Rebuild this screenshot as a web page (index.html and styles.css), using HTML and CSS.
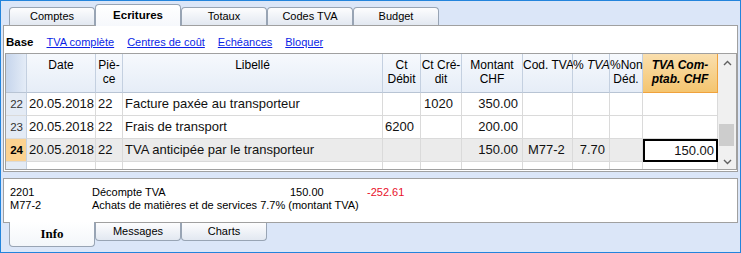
FILE: index.html
```html
<!DOCTYPE html>
<html lang="fr">
<head>
  <meta charset="UTF-8">
  <title>Ecritures</title>
  <link rel="stylesheet" href="styles.css">
</head>
<body>
  <div class="window">
    <div class="tabs top-tabs">
      <div class="tab">Comptes</div>
      <div class="tab active">Ecritures</div>
      <div class="tab">Totaux</div>
      <div class="tab">Codes TVA</div>
      <div class="tab">Budget</div>
    </div>

    <div class="panel">
      <div class="views">
        <b>Base</b>
        <a href="#">TVA complète</a>
        <a href="#">Centres de coût</a>
        <a href="#">Echéances</a>
        <a href="#">Bloquer</a>
      </div>

      <div class="table-wrap">
        <div class="grid">
          <div class="h corner"></div>
          <div class="h">Date</div>
          <div class="h">Piè-<br>ce</div>
          <div class="h">Libellé</div>
          <div class="h">Ct<br>Débit</div>
          <div class="h">Ct Cré-<br>dit</div>
          <div class="h">Montant<br>CHF</div>
          <div class="h">Cod. TVA</div>
          <div class="h">% <i>TVA</i></div>
          <div class="h">%Non<br>Déd.</div>
          <div class="h hot">TVA Com-<br>ptab. CHF</div>

          <div class="c num">22</div>
          <div class="c">20.05.2018</div>
          <div class="c">22</div>
          <div class="c">Facture paxée au transporteur</div>
          <div class="c"></div>
          <div class="c cr">1020</div>
          <div class="c r">350.00</div>
          <div class="c"></div>
          <div class="c"></div>
          <div class="c"></div>
          <div class="c"></div>

          <div class="c num">23</div>
          <div class="c">20.05.2018</div>
          <div class="c">22</div>
          <div class="c">Frais de transport</div>
          <div class="c">6200</div>
          <div class="c"></div>
          <div class="c r">200.00</div>
          <div class="c"></div>
          <div class="c"></div>
          <div class="c"></div>
          <div class="c"></div>

          <div class="c num cur">24</div>
          <div class="c row-on">20.05.2018</div>
          <div class="c row-on">22</div>
          <div class="c row-on">TVA anticipée par le transporteur</div>
          <div class="c row-on"></div>
          <div class="c row-on"></div>
          <div class="c row-on r">150.00</div>
          <div class="c row-on code">M77-2</div>
          <div class="c row-on r">7.70</div>
          <div class="c row-on"></div>
          <div class="c sel r">150.00</div>

          <div class="c num">25</div>
          <div class="c"></div>
          <div class="c"></div>
          <div class="c"></div>
          <div class="c"></div>
          <div class="c"></div>
          <div class="c"></div>
          <div class="c"></div>
          <div class="c"></div>
          <div class="c"></div>
          <div class="c"></div>
        </div>

        <div class="scrollbar">
          <div class="arrow">
            <svg width="9" height="6" viewBox="0 0 9 6"><polyline points="1,5 4.5,1.5 8,5" fill="none" stroke="#606060" stroke-width="1.4"/></svg>
          </div>
          <div class="track"><div class="thumb"></div></div>
          <div class="arrow">
            <svg width="9" height="6" viewBox="0 0 9 6"><polyline points="1,1 4.5,4.5 8,1" fill="none" stroke="#606060" stroke-width="1.4"/></svg>
          </div>
        </div>
      </div>
    </div>

    <div class="info">
      <div class="info-line">
        <span class="info-code">2201</span>
        <span class="info-desc">Décompte TVA</span>
        <span class="info-amount">150.00</span>
        <span class="info-neg">-252.61</span>
      </div>
      <div class="info-line">
        <span class="info-code">M77-2</span>
        <span>Achats de matières et de services 7.7% (montant TVA)</span>
      </div>
    </div>

    <div class="tabs bottom-tabs">
      <div class="tab active">Info</div>
      <div class="tab">Messages</div>
      <div class="tab">Charts</div>
    </div>
  </div>
</body>
</html>
```

FILE: styles.css
```css
body {
  margin: 0;
  font-family: "Liberation Sans", Arial, sans-serif;
  color: #000;
}
.window {
  width: 741px;
  height: 253px;
  box-sizing: border-box;
  border: 1px solid #2384dc;
  background: #dbe6f8;
  display: flex;
  flex-direction: column;
}

/* tabs */
.tabs {
  display: flex;
  padding-left: 8px;
}
.tab {
  width: 86px;
  box-sizing: border-box;
  height: 18px;
  border: 1px solid #98a4b4;
  background: linear-gradient(#fdfdfe, #e2e8f1);
  font-size: 11px;
  text-align: center;
  line-height: 16px;
}
.top-tabs {
  height: 24px;
  align-items: flex-end;
}
.top-tabs .tab {
  border-bottom: none;
  border-radius: 4px 4px 0 0;
}
.top-tabs .tab.active {
  height: 22px;
  margin-bottom: -1px;
  line-height: 21px;
  font-weight: bold;
  font-size: 11.5px;
  background: linear-gradient(#ffffff, #f6f8fc);
  position: relative;
  z-index: 1;
}
.bottom-tabs {
  align-items: flex-start;
}
.bottom-tabs .tab {
  border-top: none;
  border-radius: 0 0 4px 4px;
}
.bottom-tabs .tab.active {
  height: 25px;
  margin-top: -1px;
  line-height: 24px;
  font-family: "Liberation Serif", "Times New Roman", serif;
  font-weight: bold;
  font-size: 13px;
  background: linear-gradient(#ffffff, #f3f6fa);
  position: relative;
  z-index: 1;
}

/* main panel */
.panel {
  margin: 0 2px;
  height: 147px;
  box-sizing: border-box;
  border: 1px solid #a0a0a0;
  background: #fff;
  padding: 0 0 1px 1px;
}
.views {
  display: flex;
  gap: 13px;
  height: 27px;
  box-sizing: border-box;
  padding: 9px 0 0 1px;
  font-size: 11px;
  line-height: 14px;
}
.views b {
  font-size: 11.5px;
}
.views a {
  color: #0b1fe6;
  text-decoration: underline;
}

.table-wrap {
  display: flex;
  height: 117px;
  box-sizing: border-box;
  border: 1px solid #a0a0a0;
}
.grid {
  display: grid;
  grid-template-columns: 21px 69px 27px 260px 38px 41px 61px 50px 37px 33px 75px;
  grid-template-rows: 39px 23px 23px 23px 23px;
  height: 115px;
  overflow: hidden;
}
.h {
  box-sizing: border-box;
  border-right: 1px solid #c4d0e0;
  border-bottom: 1px solid #b8c4d4;
  background: linear-gradient(#f6f9fd, #e6edf7);
  font-size: 12px;
  line-height: 14px;
  padding-top: 4px;
  text-align: center;
  white-space: nowrap;
}
.h.corner {
  background: linear-gradient(to right, #c6d5ec, #e4ecf7);
}
.h.hot {
  background: linear-gradient(#fadfae, #f4c56f);
  border-right-color: #f0a23c;
  border-bottom-color: #f0a23c;
  font-weight: bold;
  font-style: italic;
}
.c {
  box-sizing: border-box;
  border-right: 1px solid #dadada;
  border-bottom: 1px solid #dadada;
  font-size: 13px;
  line-height: 22px;
  padding-left: 2px;
  color: #111;
  white-space: nowrap;
  overflow: hidden;
}
.c.r {
  text-align: right;
  padding-right: 4px;
}
.c.cr {
  padding-left: 3px;
}
.c.code {
  padding-left: 5px;
}
.c.num {
  background: #e4ebf5;
  border-right-color: #c4d0e0;
  font-size: 11.5px;
  color: #333;
  text-align: right;
  padding-right: 3px;
}
.c.num.cur {
  background: #fcd290;
  font-weight: bold;
  color: #000;
}
.c.row-on {
  background: #ebebeb;
}
.c.sel {
  border: 2px solid #000;
  background: #fff;
  line-height: 19px;
  padding-right: 2px;
}

.scrollbar {
  width: 18px;
  background: #f0f0f0;
  display: flex;
  flex-direction: column;
}
.arrow {
  height: 17px;
  display: flex;
  align-items: center;
  justify-content: center;
}
.arrow:last-child {
  height: 15px;
}
.track {
  flex: 1;
  padding-top: 53px;
}
.thumb {
  margin: 0 2px 0 1px;
  height: 22px;
  background: #cdcdcd;
}

/* info panel */
.info {
  margin: 6px 2px 0;
  height: 45px;
  box-sizing: border-box;
  border: 1px solid #a0a0a0;
  background: #fff;
  padding: 7px 0 0 6px;
  font-size: 11px;
  line-height: 13px;
}
.info-line {
  display: flex;
  white-space: nowrap;
}
.info-code {
  width: 82px;
}
.info-desc {
  width: 198px;
}
.info-amount {
  width: 77px;
}
.info-neg {
  color: #e8102a;
}
```
